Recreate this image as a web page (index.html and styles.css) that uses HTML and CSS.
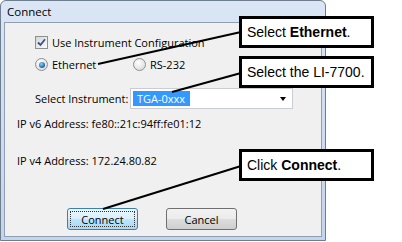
FILE: index.html
```html
<!DOCTYPE html>
<html lang="en">
<head>
    <meta charset="UTF-8">
    <title>Connect</title>
    <link rel="stylesheet" href="styles.css">
</head>
<body>
    <div class="stage">
        <div class="window">
            <div class="titlebar">Connect</div>
            <div class="client">
                <div class="check-row">
                    <span class="checkbox">
                        <svg width="9" height="9" viewBox="0 0 9 9"><path d="M1 4.5 L3.5 7 L8 1.2" fill="none" stroke="#3b4f8a" stroke-width="1.8"/></svg>
                    </span>
                    Use Instrument Configuration
                </div>

                <div class="radio-row">
                    <div class="radio on"><span class="dot"></span>Ethernet</div>
                    <div class="radio"><span class="dot"></span>RS-232</div>
                </div>

                <div class="instrument-row">
                    <span class="instrument-label">Select Instrument:</span>
                    <div class="combo">
                        <span class="combo-value">TGA-0xxx</span>
                        <span class="arrow"></span>
                    </div>
                </div>

                <div class="address">IP v6 Address: fe80::21c:94ff:fe01:12</div>
                <div class="address v4">IP v4 Address: 172.24.80.82</div>

                <div class="buttons">
                    <button class="btn default"><span class="focus">Connect</span></button>
                    <button class="btn">Cancel</button>
                </div>
            </div>
        </div>

        <!-- leader lines for the callouts -->
        <svg class="leaders" width="402" height="242">
            <line x1="98" y1="64" x2="241" y2="32" />
            <line x1="172" y1="92" x2="241" y2="73" />
            <line x1="103" y1="209" x2="241" y2="166" />
        </svg>

        <div class="callout c1">Select <b>Ethernet</b>.</div>
        <div class="callout c2">Select the LI-7700.</div>
        <div class="callout c3">Click <b>Connect</b>.</div>
    </div>
</body>
</html>
```

FILE: styles.css
```css
body {
    margin: 0;
    background: #ffffff;
    font-family: 'Open Sans', 'Noto Sans', sans-serif;
    font-size: 11px;
    color: #000;
}

.stage {
    position: relative;
    width: 402px;
    height: 242px;
    overflow: hidden;
}

.window {
    width: 326px;
    height: 241px;
    box-sizing: border-box;
    border: 1px solid #6f7d8e;
    border-radius: 6px 6px 0 0;
    background: linear-gradient(180deg, #dae6f5, #c3d5ec);
    padding: 0 3px 3px 3px;
    display: flex;
    flex-direction: column;
}

.titlebar {
    height: 21px;
    line-height: 22px;
    padding-left: 3px;
    font-size: 11.5px;
    color: #000;
}

.client {
    flex: 1;
    background: #f0f0f0;
    border: 1px solid #8f9fb4;
    padding: 13px 0 0 12px;
}

.check-row {
    display: flex;
    align-items: center;
    height: 13px;
    margin-left: 18px;
}

.checkbox {
    width: 11px;
    height: 11px;
    border: 1px solid #8e8f8f;
    background: linear-gradient(135deg, #d6d6d6, #fbfbfb);
    margin-right: 4px;
    display: flex;
    align-items: center;
    justify-content: center;
}

.radio-row {
    display: flex;
    height: 13px;
    margin: 9px 0 0 18px;
}

.radio {
    display: flex;
    align-items: center;
    width: 98px;
}

.dot {
    width: 11px;
    height: 11px;
    border: 1px solid #8e8f8f;
    border-radius: 50%;
    background: radial-gradient(circle at 40% 35%, #ffffff, #d4d4d4);
    margin-right: 4px;
    display: flex;
    align-items: center;
    justify-content: center;
}

.radio.on .dot::after {
    content: "";
    width: 6px;
    height: 6px;
    border-radius: 50%;
    background: radial-gradient(circle at 40% 35%, #8fd0f5, #1661a8 70%);
}

.instrument-row {
    display: flex;
    align-items: center;
    margin: 17px 0 0 18px;
}

.instrument-label {
    width: 95px;
}

.combo {
    width: 153px;
    height: 19px;
    border: 1px solid #c9ccd2;
    background: #ffffff;
    display: flex;
    align-items: center;
    justify-content: space-between;
    padding: 0 6px 0 2px;
}

.combo-value {
    background: #3399ff;
    color: #ffffff;
    width: 53px;
    height: 15px;
    line-height: 15px;
    padding-left: 4px;
}

.arrow {
    width: 0;
    height: 0;
    border-left: 3.5px solid transparent;
    border-right: 3.5px solid transparent;
    border-top: 4px solid #000;
}

.address {
    margin-top: 7px;
    line-height: 15px;
}

.address.v4 {
    margin-top: 22px;
}

.buttons {
    display: flex;
    gap: 28px;
    margin: 40px 0 0 50px;
}

.btn {
    width: 71px;
    height: 22px;
    border: 1px solid #707070;
    border-radius: 3px;
    background: linear-gradient(180deg, #f2f2f2 0%, #ebebeb 50%, #dddddd 51%, #cfcfcf 100%);
    font-family: inherit;
    font-size: 11px;
    padding: 0;
    color: #000;
}

.btn.default {
    border-color: #3c7fb1;
    background: linear-gradient(180deg, #eaf6fd 0%, #d9f0fc 50%, #bee6fd 51%, #a7d9f5 100%);
    padding: 2px;
}

.focus {
    display: block;
    height: 100%;
    box-sizing: border-box;
    border: 1px dotted #333;
    line-height: 15px;
}

.leaders {
    position: absolute;
    left: 0;
    top: 0;
}

.leaders line {
    stroke: #000;
    stroke-width: 2;
}

.callout {
    position: absolute;
    left: 239px;
    width: 124px;
    height: 26px;
    border: 3px solid #000;
    background: #ffffff;
    font-family: 'Liberation Sans', Arial, sans-serif;
    font-size: 14px;
    line-height: 27px;
    padding-left: 5px;
}

.c1 { top: 16px; }
.c2 { top: 56px; }
.c3 { top: 149px; }
```
